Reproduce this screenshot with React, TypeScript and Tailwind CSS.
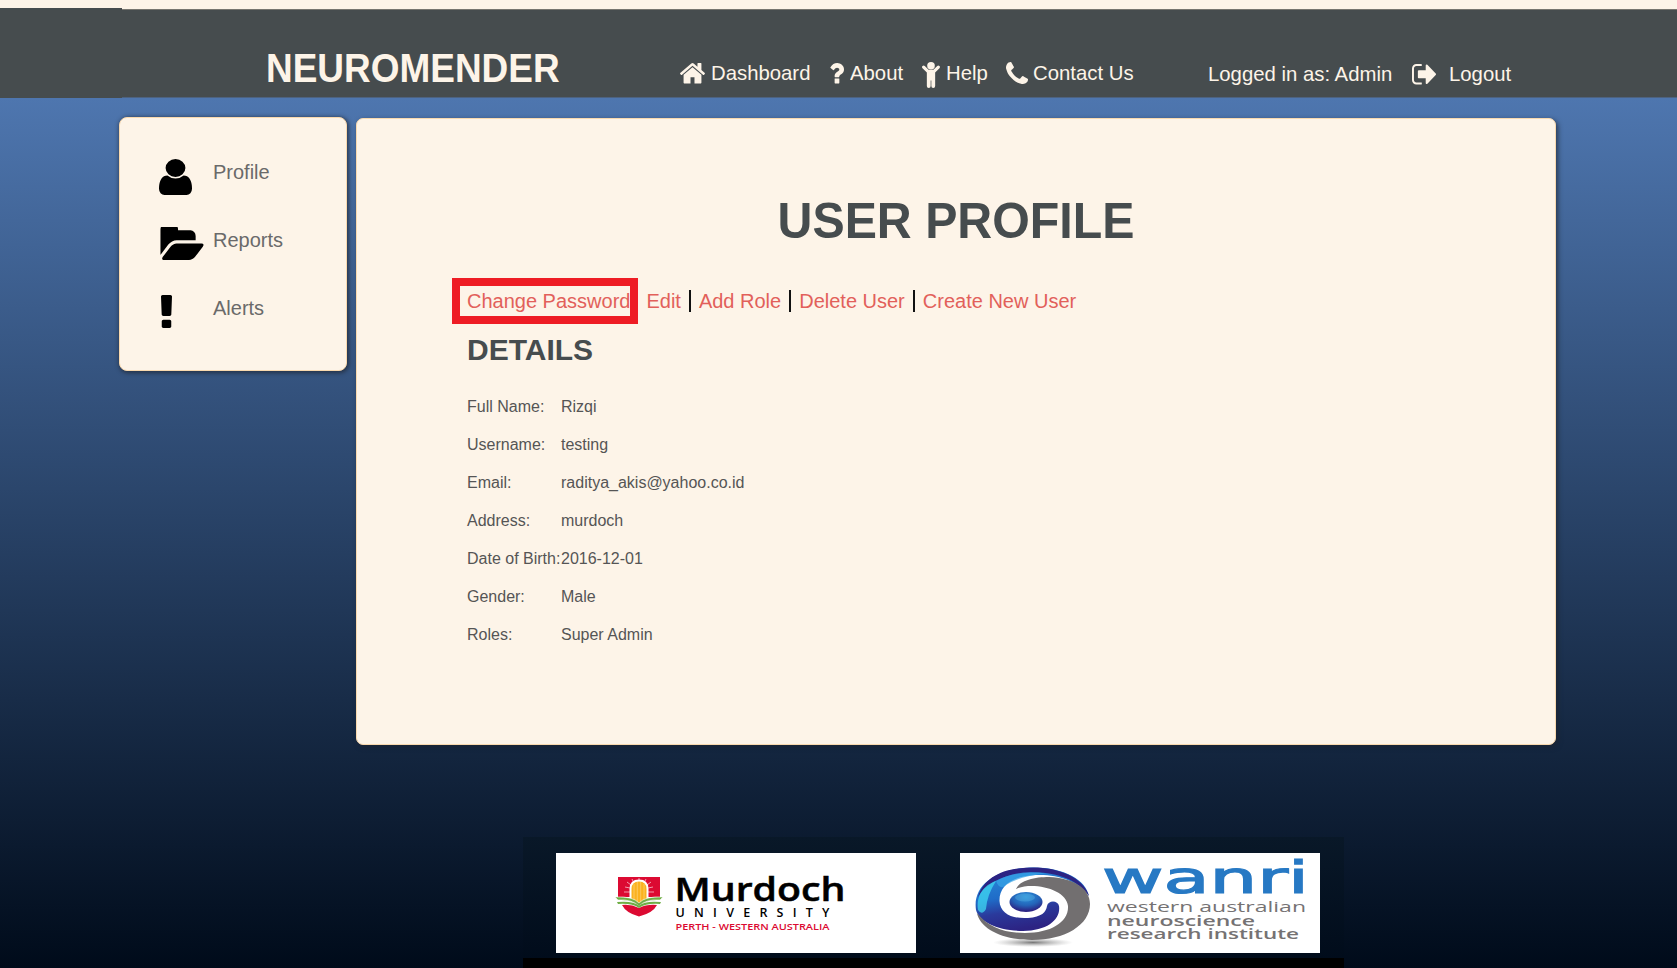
import React from "react";

const paths = {
  home: "M1472 992v480q0 26-19 45t-45 19h-384v-384h-256v384h-384q-26 0-45-19t-19-45v-480q0-1 .5-3t.5-3l575-474 575 474q1 2 1 6zm223-69l-62 74q-8 9-21 11h-3q-13 0-21-7l-692-577-692 577q-12 8-24 7-13-2-21-11l-62-74q-8-10-7-23.5t11-21.5l719-599q32-26 76-26t76 26l244 204v-195q0-14 9-23t23-9h192q14 0 23 9t9 23v408l219 182q10 8 11 21.5t-7 23.5z",
  question:
    "M1088 1256v240q0 16-12 28t-28 12h-240q-16 0-28-12t-12-28v-240q0-16 12-28t28-12h240q16 0 28 12t12 28zm316-600q0 54-15.5 101t-35 76.5-55 59.5-57.5 43.5-61 35.5q-41 23-68.5 65t-27.5 67q0 17-12 32.5t-28 15.5h-240q-15 0-25.5-18.5t-10.5-37.5v-45q0-83 65-156.5t143-108.5q59-27 84-56t25-76q0-42-46.5-74t-107.5-32q-65 0-108 29-35 25-107 115-13 16-31 16-12 0-25-8l-164-125q-13-10-15.5-25t5.5-28q160-266 464-266 80 0 161 31t146 83 106 127.5 41 158.5z",
  phone:
    "M1600 1240q0 27-10 70.5t-21 68.5q-21 50-122 106-94 51-186 51-27 0-53-3.5t-57.5-12.5-47-14.5-55.5-20.5-49-18q-98-35-175-83-127-79-264-216t-216-264q-48-77-83-175-3-9-18-49t-20.5-55.5-14.5-47-12.5-57.5-3.5-53q0-92 51-186 56-101 106-122 25-11 68.5-21t70.5-10q14 0 21 3 18 6 53 76 11 19 30 54t35 63.5 31 53.5q3 4 17.5 25t21.5 35.5 7 28.5q0 20-28.5 50t-62 55-62 53-28.5 46q0 9 5 22.5t8.5 20.5 14 24 11.5 19q76 137 174 235t235 174q2 1 19 11.5t24 14 20.5 8.5 22.5 5q18 0 46-28.5t53-62 55-62 50-28.5q14 0 28.5 7t35.5 21.5 25 17.5q25 15 53.5 31t63.5 35 54 30q70 35 76 53 3 7 3 21z",
  signOut:
    "M704 1440q0 4 1 20t.5 26.5-3 23.5-10 19.5-20.5 6.5h-320q-119 0-203.5-84.5t-84.5-203.5v-704q0-119 84.5-203.5t203.5-84.5h320q13 0 22.5 9.5t9.5 22.5q0 4 1 20t.5 26.5-3 23.5-10 19.5-20.5 6.5h-320q-66 0-113 47t-47 113v704q0 66 47 113t113 47h312l11.5 1 11.5 3 8 5.5 7 9 2 13.5zm928-544q0 26-19 45l-544 544q-19 19-45 19t-45-19-19-45v-288h-448q-26 0-45-19t-19-45v-384q0-26 19-45t45-19h448v-288q0-26 19-45t45-19 45 19l544 544q19 19 19 45z",
  user: "M1536 1399q0 109-62.5 187t-150.5 78h-854q-88 0-150.5-78t-62.5-187q0-85 8.5-160.5t31.5-152 58.5-131 94-89 134.5-34.5q131 128 313 128t313-128q76 0 134.5 34.5t94 89 58.5 131 31.5 152 8.5 160.5zm-256-887q0 159-112.5 271.5t-271.5 112.5-271.5-112.5-112.5-271.5 112.5-271.5 271.5-112.5 271.5 112.5 112.5 271.5z",
  folder:
    "M1943 952q0 31-31 66l-336 396q-43 51-120.5 86.5t-143.5 35.5h-1088q-34 0-60.5-13t-26.5-43q0-31 31-66l336-396q43-51 120.5-86.5t143.5-35.5h1088q34 0 60.5 13t26.5 43zm-343-344v160h-832q-94 0-197 47.5t-164 119.5l-337 396-5 6q0-4-.5-12.5t-.5-12.5v-960q0-92 66-158t158-66h320q92 0 158 66t66 158v32h544q92 0 158 66t66 158z",
  alert:
    "M1088 1248v224q0 26-19 45t-45 19h-256q-26 0-45-19t-19-45v-224q0-26 19-45t45-19h256q26 0 45 19t19 45zm30-1056l-28 768q-1 26-20.5 45t-45.5 19h-256q-26 0-45.5-19t-20.5-45l-28-768q-1-26 17.5-45t44.5-19h320q26 0 44.5 19t17.5 45z",
};

function Icon({ d, box, className }: { d: string; box: string; className: string }) {
  return (
    <svg viewBox={box} preserveAspectRatio="none" fill="currentColor" className={`shrink-0 ${className}`}>
      <path d={d} />
    </svg>
  );
}

function ChildIcon({ className }: { className: string }) {
  return (
    <svg viewBox="0 0 52 76" preserveAspectRatio="none" fill="currentColor" className={`shrink-0 ${className}`}>
      <circle cx="26" cy="11" r="11" />
      <path d="M1.5 11.5a4.6 4.6 0 0 1 6.5 0L19 22.500H33L44 11.500a4.600 4.600 0 0 1 6.500 6.500L38 30.500V70.500a5.500 5.500 0 0 1-11 0V54H25V70.500a5.500 5.500 0 0 1-11 0V30.500L1.500 18a4.600 4.600 0 0 1 0-6.500Z" />
    </svg>
  );
}

function MurdochLogo() {
  return (
    <svg viewBox="0 0 360 100" className="h-[100px] w-[360px] bg-white">
      <path d="M62 24H104V44H62Z" fill="#dc0a32" />
      <path d="M66 52Q75 51 83 55Q91 51 101 52Q97 60 83 63.500Q70 60 66 52Z" fill="#dc0a32" />
      <path
        d="M83 25V30M76 26L78 30M90 26L88 30M71 29L75 32M95 29L91 32M69 34L74 35M97 34L92 35M68 39H74M98 39H92"
        stroke="#fff"
        strokeWidth="0.600"
      />
      <path d="M73.500 49V36Q73.500 26.500 83 26.500Q92.500 26.500 92.500 36V49L83 53Z" fill="#fff" />
      <path d="M75.500 48V36Q75.500 28.500 83 28.500Q90.500 28.500 90.500 36V48L83 50.500Z" fill="#fbb21e" />
      <path d="M78 31V49M81.300 29V50M84.700 29V50M88 31V49" stroke="#fdd98a" strokeWidth="0.600" />
      <path d="M59 44Q77 43 83 50Q89 43 107 44L104 47Q90 46 83 53Q76 46 62 47Z" fill="#6fae45" stroke="#fff" strokeWidth="0.600" />
      <path d="M61 49Q77 47.500 83 52.500Q89 47.500 105 49L104 51Q90 50 83 55Q76 50 62 51Z" fill="#6fae45" />
      <text x="118.500" y="47.500" textLength="171" lengthAdjust="spacingAndGlyphs" className="font-['Open_Sans'] text-[32.500px] font-semibold" fill="#000" stroke="#000" strokeWidth="0.500">
        Murdoch
      </text>
      <text x="119.500" y="63.500" textLength="154" lengthAdjust="spacing" className="font-['Open_Sans'] text-[12.500px] font-semibold" fill="#000">
        UNIVERSITY
      </text>
      <text x="119.500" y="77" textLength="154" lengthAdjust="spacingAndGlyphs" className="font-['Open_Sans'] text-[9px] font-semibold" fill="#dc0a32">
        PERTH - WESTERN AUSTRALIA
      </text>
    </svg>
  );
}

function WanriLogo() {
  return (
    <svg viewBox="0 0 360 100" className="h-[100px] w-[360px] bg-white">
      <defs>
        <linearGradient id="swirl" x1="0" y1="0" x2="0.300" y2="1">
          <stop offset="0" stopColor="#2b8fdc" />
          <stop offset="0.500" stopColor="#1f6cc8" />
          <stop offset="0.720" stopColor="#2a3a9c" />
          <stop offset="1" stopColor="#2c2383" />
        </linearGradient>
        <radialGradient id="pupil" cx="0.500" cy="0.250" r="0.700">
          <stop offset="0" stopColor="#2a93dc" />
          <stop offset="0.600" stopColor="#2463b8" />
          <stop offset="1" stopColor="#2c2383" />
        </radialGradient>
        <radialGradient id="shade">
          <stop offset="0" stopColor="#555" stopOpacity="0.800" />
          <stop offset="1" stopColor="#999" stopOpacity="0" />
        </radialGradient>
      </defs>
      <ellipse cx="73" cy="89.500" rx="40" ry="4.500" fill="url(#shade)" />
      <path d="M16 57C12 30 40 14.500 74 14.500C104 14.500 126 27 129 43C119 28 97 21 76 22C52 23 39 33 39.500 48C40 61 53 66 68 65C82 64 86 59 87 53C88 47 98 47 99 53C101 66 88 78 63 78C39 78 19 69 16 57Z" fill="url(#swirl)" />
      <path d="M58 15.500C90 11 122 21 129 43C118 27 98 19.500 75 19.500C50 19.500 28 27 18 44C23 27 38 18 58 15.500Z" fill="#2c2383" />
      <path d="M18 57C16 42 24 32 36 28Q27 42 26 56Q22 63 18 57Z" fill="#42dff5" opacity="0.700" />
      <path d="M36 28Q58 16 86 20.500Q60 23 46 32Q40 38 36 28Z" fill="#37a5e8" opacity="0.700" />
      <path d="M56 36C60 27 75 24 89 24C113 25 130 35 130 51C130 72 105 87 72 87C43 87 20 76 17 60C28 74 44 80 65 80C91 80 109 69 108 53C107 40 87 32 68 33Q60 34 56 36Z" fill="#726f70" />
      <ellipse cx="66" cy="49" rx="16.500" ry="10" fill="url(#pupil)" />
      <ellipse cx="65" cy="44.500" rx="10" ry="4" fill="#63bde8" opacity="0.350" />
      <text x="142" y="39.500" textLength="207" lengthAdjust="spacingAndGlyphs" className="font-['DejaVu_Sans'] text-[44px]" fill="#2779c4" stroke="#2779c4" strokeWidth="1.200">
        wanri
      </text>
      <g className="font-['Open_Sans'] text-[15px]" fill="#757273">
        <text x="147" y="59" textLength="199" lengthAdjust="spacingAndGlyphs">western australian</text>
        <text x="147" y="72.500" textLength="148" lengthAdjust="spacingAndGlyphs" className="font-semibold">neuroscience</text>
        <text x="147" y="86" textLength="192" lengthAdjust="spacingAndGlyphs" className="font-semibold">research institute</text>
      </g>
    </svg>
  );
}

const details = [
  ["Full Name:", "Rizqi"],
  ["Username:", "testing"],
  ["Email:", "raditya_akis@yahoo.co.id"],
  ["Address:", "murdoch"],
  ["Date of Birth:", "2016-12-01"],
  ["Gender:", "Male"],
  ["Roles:", "Super Admin"],
];

function Divider() {
  return <span className="mx-[8px] mt-[8px] h-[22px] w-[2px] shrink-0 bg-[#111]" />;
}

function NavText({ children }: { children: React.ReactNode }) {
  return <span className="inline-block origin-left scale-x-[0.968]">{children}</span>;
}

export default function App() {
  return (
    <div className="flex h-[968px] w-[1677px] flex-col overflow-hidden bg-[#fdf4e8] font-['Liberation_Sans',sans-serif]">
      <header className="flex h-[98px] shrink-0">
        <div className="mt-[8px] w-[122px] bg-[#464c4e]" />
        <div className="mt-[9px] mb-px flex flex-1 border-t border-[#77766f] bg-[#464c4e] text-[#fdf4e8] shadow-[0_1px_0_#4d6280]">
          <div className="ml-[144px] w-[412px] pt-[33px]">
            <span className="inline-block origin-left scale-x-[0.924] text-[40px] leading-[50px] font-bold">NEUROMENDER</span>
          </div>
          <nav className="flex pt-[48px] text-[21px] leading-[30px] whitespace-nowrap">
            <a className="flex w-[151px]">
              <Icon d={paths.home} box="89 253 1614 1283" className="mt-[5px] ml-[2px] h-[20.500px] w-[25px]" />
              <span className="ml-[6px]"><NavText>Dashboard</NavText></span>
            </a>
            <a className="flex w-[92px]">
              <Icon d={paths.question} box="386 256 1018 1280" className="mt-[5px] h-[20.500px] w-[15px]" />
              <span className="ml-[6px]"><NavText>About</NavText></span>
            </a>
            <a className="flex w-[84px]">
              <ChildIcon className="mt-[4px] ml-px h-[26px] w-[18px]" />
              <span className="ml-[6px]"><NavText>Help</NavText></span>
            </a>
            <a className="flex w-[203px]">
              <Icon d={paths.phone} box="192 128 1408 1408" className="mt-[4px] ml-px h-[22px] w-[22px]" />
              <span className="ml-[5px]"><NavText>Contact Us</NavText></span>
            </a>
          </nav>
          <div className="flex pt-[49px] text-[21px] leading-[30px] whitespace-nowrap">
            <span className="w-[204px]"><NavText>Logged in as: Admin</NavText></span>
            <Icon d={paths.signOut} box="64 256 1568 1280" className="mt-[5px] h-[20.500px] w-[24px]" />
            <span className="ml-[13px]"><NavText>Logout</NavText></span>
          </div>
        </div>
      </header>

      <div className="flex flex-1 flex-col bg-[linear-gradient(to_bottom,#4e76af,#000b1a)]">
        <div className="flex h-[739px] shrink-0 items-start pl-[119px]">
          <aside className="mt-[19px] h-[254px] w-[228px] rounded-[8px] border border-[#f9d9ae] bg-[#fdf4e8] pt-[31px] pl-[39px] text-[20px] leading-[30px] text-[#6a6a6a] shadow-[1px_1px_4px_1px_rgba(30,35,45,0.700)]">
            <a className="flex h-[68px]">
              <span className="w-[54px] pt-[10px] text-black">
                <Icon d={paths.user} box="256 128 1280 1536" className="h-[36px] w-[33px]" />
              </span>
              <span className="pt-[8px]">Profile</span>
            </a>
            <a className="flex h-[68px]">
              <span className="w-[54px] pt-[10px] text-black">
                <Icon d={paths.folder} box="0 256 1943 1280" className="h-[33px] w-[44.500px]" />
              </span>
              <span className="pt-[8px]">Reports</span>
            </a>
            <a className="flex h-[68px]">
              <span className="w-[54px] pt-[10px] pl-[2px] text-black">
                <Icon d={paths.alert} box="674 128 444 1408" className="h-[33px] w-[11px]" />
              </span>
              <span className="pt-[8px]">Alerts</span>
            </a>
          </aside>

          <main className="mt-[20px] ml-[9px] h-[627px] w-[1200px] rounded-[7px] border border-[#f9d9ae] bg-[#fdf4e8] px-[110px] pt-[72px] shadow-[2px_2px_5px_rgba(30,35,45,0.700)]">
            <h1 className="scale-x-[0.966] text-center text-[50px] leading-[60px] font-bold text-[#464c4e]">USER PROFILE</h1>
            <div className="mt-[31px] flex h-[38px] text-[20px] leading-[38px] whitespace-nowrap text-[#e2605a]">
              <div className="relative">
                Change Password
                <span className="absolute -top-[4px] -left-[15px] h-[46px] w-[186px] border-x-[8px] border-y-[8px] border-[#ee1c24]" />
              </div>
              <span className="w-[16px]" />
              <a>Edit</a>
              <Divider />
              <a>Add Role</a>
              <Divider />
              <a>Delete User</a>
              <Divider />
              <a>Create New User</a>
            </div>
            <h2 className="mt-[11px] text-[30px] leading-[38px] font-bold text-[#464c4e]">DETAILS</h2>
            <dl className="mt-[19px] text-[16px] leading-[38px] text-[#555]">
              {details.map(([k, v]) => (
                <div key={k} className="flex h-[38px] whitespace-nowrap">
                  <dt className="w-[94px]">{k}</dt>
                  <dd>{v}</dd>
                </div>
              ))}
            </dl>
          </main>
        </div>

        <footer className="ml-[523px] flex w-[821px] flex-1 flex-col justify-between bg-[linear-gradient(to_bottom,#091828,#000b1a)]">
          <div className="flex gap-[44px] pt-[16px] pl-[33px]">
            <MurdochLogo />
            <WanriLogo />
          </div>
          <div className="h-[10px] bg-black" />
        </footer>
      </div>
    </div>
  );
}
